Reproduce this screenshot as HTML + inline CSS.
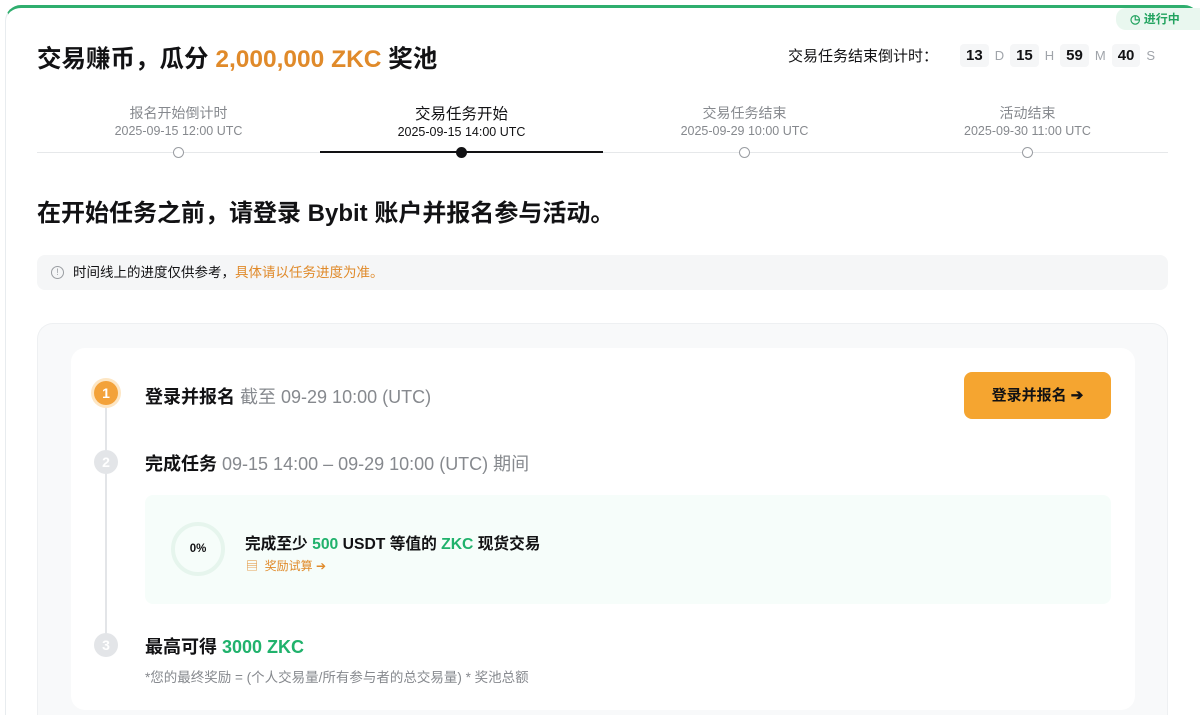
<!DOCTYPE html>
<html><head><meta charset="utf-8"><style>
*{box-sizing:border-box;margin:0;padding:0}
html{width:1200px;height:715px;overflow:hidden}
body{width:1200px;height:715px;overflow:hidden;background:#fff;font-family:"Liberation Sans","Noto Sans CJK SC",sans-serif;color:#121214;position:relative}
.abs{position:absolute}
.card{left:5px;top:5px;width:1195px;height:710px;border-top:3px solid #2fae6e;border-left:1px solid #e8ecef;border-radius:16px 16px 0 0}
.badge{right:0;top:8px;width:84px;height:22px;background:#e9f7ef;border-radius:10px 0 0 10px;color:#22a35f;font-size:12px;line-height:22px;padding-left:14px;font-weight:bold}
h1{font-size:24.5px;font-weight:bold;left:37px;top:40px;letter-spacing:0}
.or{color:#e08a2a}.gr{color:#20b26c}
.cd{top:44px;left:788px;font-size:15px;color:#121214;display:flex;align-items:center}
.num{background:#f5f6f7;border-radius:4px;font-weight:bold;font-size:15px;padding:3px 6px;margin-left:4px}
.u{color:#a0a4aa;font-size:13px;margin:0 2px 0 6px}
.tl{top:103px;width:283px;text-align:center;font-size:14px;color:#86898e}
.tl b{display:block;font-weight:normal;font-size:14px}
.tl span{display:block;font-size:12.5px;margin-top:1px}
.dot{top:147px;width:11px;height:11px;border-radius:50%;border:1px solid #9a9da2;background:#fff}
h2{left:37px;top:193px;font-size:24px;font-weight:bold}
.note{left:37px;top:255px;width:1131px;height:35px;background:#f5f6f7;border-radius:8px;font-size:13.5px;line-height:35px;padding-left:36px}
.gray{left:37px;top:323px;width:1131px;height:392px;background:#f8f9fa;border:1px solid #eef0f2;border-bottom:none;border-radius:16px 16px 0 0}
.white{left:71px;top:348px;width:1064px;height:362px;background:#fff;border-radius:14px}
.step{width:24px;height:24px;border-radius:50%;background:#e3e5e8;color:#fff;font-weight:bold;font-size:14px;text-align:center;line-height:24px}
.st{font-size:18px;font-weight:bold}
.st i{font-style:normal;font-weight:normal;color:#86898e}
</style></head><body>
<div class="abs card"></div>
<div class="abs badge">◷ 进行中</div>
<h1 class="abs">交易赚币，瓜分 <span class="or">2,000,000 ZKC</span> 奖池</h1>
<div class="abs cd">交易任务结束倒计时：<span style="width:18px"></span><span class="num">13</span><span class="u">D</span><span class="num">15</span><span class="u">H</span><span class="num">59</span><span class="u">M</span><span class="num">40</span><span class="u">S</span></div>

<div class="abs" style="left:37px;top:152px;width:1131px;height:1px;background:#e6e8ea"></div>
<div class="abs" style="left:320px;top:151px;width:283px;height:2px;background:#121214"></div>
<div class="abs tl" style="left:37px"><b>报名开始倒计时</b><span>2025-09-15 12:00 UTC</span></div>
<div class="abs tl" style="left:320px;color:#121214"><b style="font-size:15.5px;margin-top:-1px">交易任务开始</b><span>2025-09-15 14:00 UTC</span></div>
<div class="abs tl" style="left:603px"><b>交易任务结束</b><span>2025-09-29 10:00 UTC</span></div>
<div class="abs tl" style="left:886px"><b>活动结束</b><span>2025-09-30 11:00 UTC</span></div>
<div class="abs dot" style="left:173px"></div>
<div class="abs dot" style="left:456px;background:#121214;border-color:#121214"></div>
<div class="abs dot" style="left:739px"></div>
<div class="abs dot" style="left:1022px"></div>

<h2 class="abs">在开始任务之前，请登录 Bybit 账户并报名参与活动。</h2>
<div class="abs note"><span class="abs" style="left:14px;top:11px;width:13px;height:13px;border:1px solid #9a9da2;border-radius:50%;font-size:9px;line-height:11px;text-align:center;color:#9a9da2">!</span>时间线上的进度仅供参考，<span class="or">具体请以任务进度为准。</span></div>

<div class="abs gray"></div>
<div class="abs white"></div>
<div class="abs" style="left:105px;top:394px;width:2px;height:250px;background:#e3e5e8"></div>
<div class="abs step" style="left:94px;top:381px;background:#f3a23a;box-shadow:0 0 0 3px #fde6c4">1</div>
<div class="abs step" style="left:94px;top:450px">2</div>
<div class="abs step" style="left:94px;top:633px">3</div>
<div class="abs st" style="left:145px;top:383px">登录并报名 <i>截至 09-29 10:00 (UTC)</i></div>
<div class="abs st" style="left:145px;top:450px">完成任务 <i>09-15 14:00 – 09-29 10:00 (UTC) 期间</i></div>
<div class="abs" style="left:964px;top:372px;width:147px;height:47px;background:#f5a530;border-radius:8px;font-size:15px;font-weight:bold;text-align:center;line-height:47px">登录并报名 ➔</div>

<div class="abs" style="left:145px;top:495px;width:966px;height:109px;background:#f6fdfa;border-radius:8px"></div>
<div class="abs" style="left:171px;top:522px;width:54px;height:54px;border-radius:50%;border:4px solid #e6f5ed;font-size:11.5px;font-weight:bold;text-align:center;line-height:46px">0%</div>
<div class="abs" style="left:245px;top:531px;font-size:15.7px;font-weight:bold">完成至少 <span class="gr">500</span> USDT 等值的 <span class="gr">ZKC</span> 现货交易</div>
<div class="abs or" style="left:246px;top:557px;font-size:12px">▤ &nbsp;奖励试算 ➔</div>

<div class="abs st" style="left:145px;top:633px">最高可得 <span class="gr">3000 ZKC</span></div>
<div class="abs" style="left:145px;top:666px;font-size:13.5px;color:#86898e">*您的最终奖励 = (个人交易量/所有参与者的总交易量) * 奖池总额</div>
</body></html>
